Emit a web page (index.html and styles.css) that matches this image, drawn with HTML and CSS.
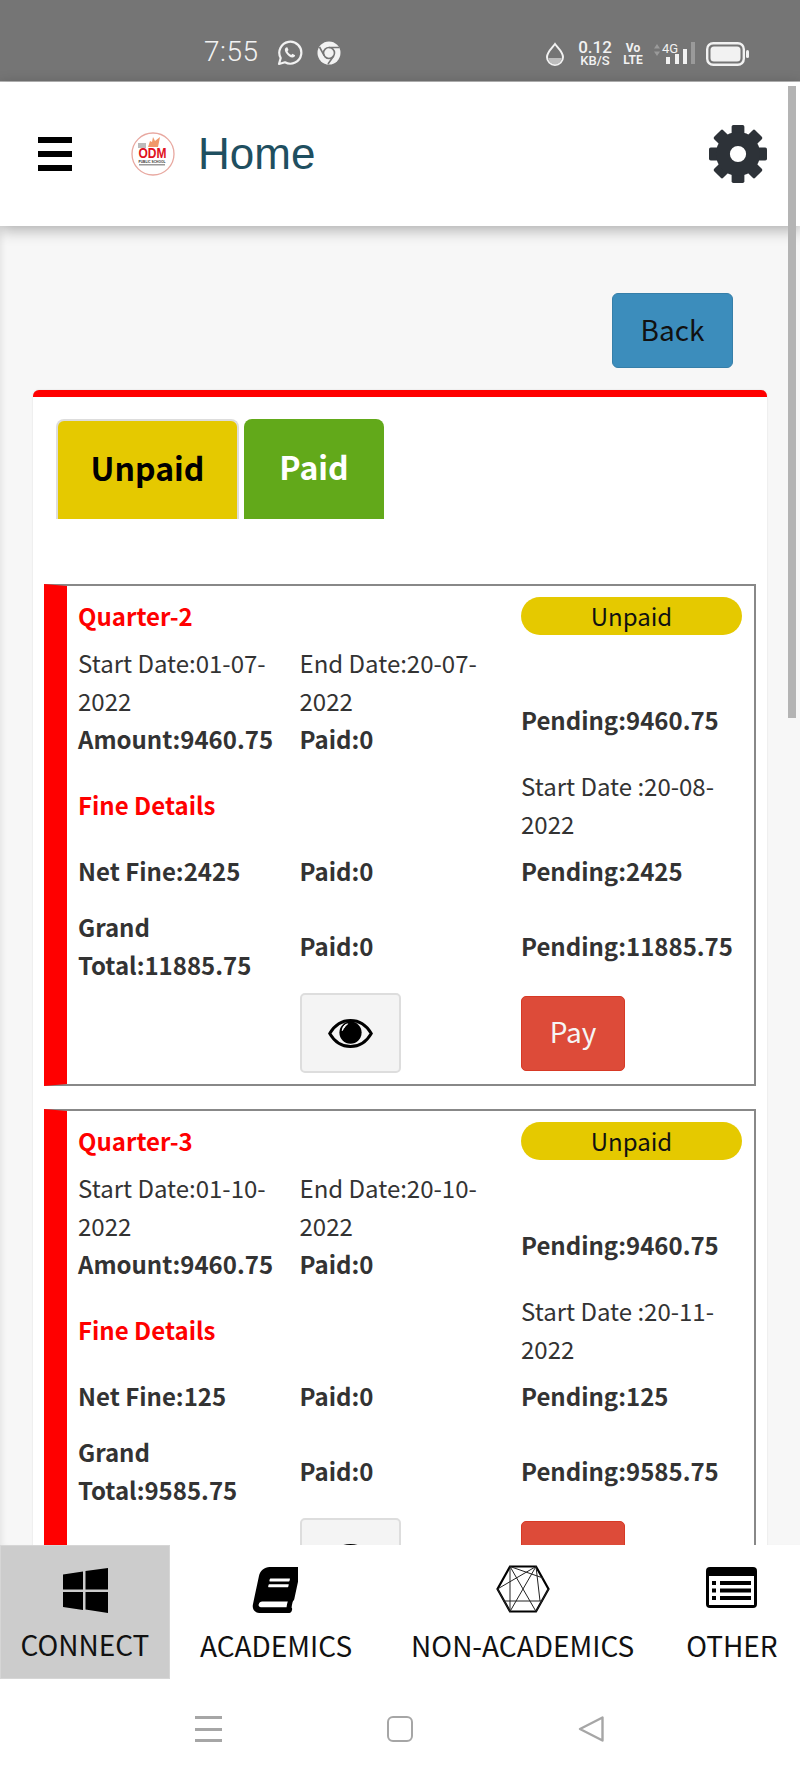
FILE: index.html
```html
<!DOCTYPE html>
<html lang="en">
<head>
  <meta charset="UTF-8">
  <meta name="viewport" content="width=device-width, initial-scale=1.0">
  <title>Home</title>
  <link rel="stylesheet" href="styles.css">
</head>
<body>

  <div class="scroll-thumb"></div>

  <!-- Phone status bar -->
  <div class="status-bar">
    <div class="status-left">
      <span class="clock">7:55</span>
      <svg class="st-whatsapp" viewBox="0 0 26 26"><path d="M2 24l1.7-6A11 11 0 1 1 8 22.3z" fill="none" stroke="#f2f2f2" stroke-width="2.2" stroke-linejoin="round"/><path d="M9 7.500c-1.500 1-1.600 3 0 5.500 1.800 2.800 4.500 4.600 6.500 4.500 1.500-.1 2.700-1.200 2.600-2.300l-2.700-1.400-1.200 1.200c-1.500-.6-3-2-3.700-3.700l1-1.200-1.200-2.800z" fill="#f2f2f2"/></svg>
      <svg class="st-chrome" viewBox="0 0 24 24"><circle cx="12" cy="12" r="11.500" fill="#f2f2f2"/><circle cx="12" cy="12" r="5.500" fill="#f2f2f2" stroke="#757575" stroke-width="1.600"/><path d="M12 6.500h10M7.200 14.700L2.500 6M16.800 14.700L11 23" stroke="#757575" stroke-width="1.600"/></svg>
    </div>
    <div class="status-right">
      <svg class="st-drop" viewBox="0 0 20 24"><path d="M10 2c3 4 8 8 8 13a8 8 0 0 1-16 0C2 10 7 6 10 2z" fill="none" stroke="#f2f2f2" stroke-width="2"/><path d="M3.500 16h13a6.500 6.500 0 0 1-13 0z" fill="#bdbdbd"/></svg>
      <div class="st-speed"><span class="st-num">0.12</span><span class="st-unit">KB/S</span></div>
      <div class="st-volte"><span>Vo</span><span>LTE</span></div>
      <div class="st-net">
        <svg class="st-arrows" viewBox="0 0 6 12"><path d="M3 0l3 4.500H0zM3 12L0 7.500h6z" fill="#9a9a9a"/></svg>
        <span class="st-4g">4G</span>
        <svg class="st-bars" viewBox="0 0 29 22"><rect x="0" y="15" width="4" height="7" fill="#f2f2f2"/><rect x="9" y="12" width="4" height="10" fill="#f2f2f2"/><rect x="17" y="7" width="4" height="15" fill="#f2f2f2"/><rect x="25" y="0" width="4" height="22" fill="#9a9a9a"/></svg>
      </div>
      <svg class="st-battery" viewBox="0 0 43 24"><rect x="1.200" y="1.200" width="36.600" height="21.600" rx="6" fill="none" stroke="#f2f2f2" stroke-width="2.400"/><rect x="4.500" y="4.500" width="30" height="15" rx="3.500" fill="#f2f2f2"/><rect x="40" y="8" width="3" height="8" rx="1.500" fill="#f2f2f2"/></svg>
    </div>
  </div>

  <!-- App header -->
  <header class="app-header">
    <div class="burger"><span></span><span></span><span></span></div>
    <svg class="logo" viewBox="0 0 44 44">
      <circle cx="22" cy="22" r="21" fill="#fff" stroke="#e8a8a0" stroke-width="1.300"/>
      <rect x="7" y="11" width="8" height="5" fill="#bbb"/>
      <path d="M17 15l2-6 2 1 1-5 2 4 5-4-2 10z" fill="#f0986a"/>
      <text x="7.500" y="26" class="logo-odm" textLength="28" lengthAdjust="spacingAndGlyphs">ODM</text>
      <text x="7.500" y="30.500" class="logo-school" textLength="27" lengthAdjust="spacingAndGlyphs">PUBLIC SCHOOL</text>
      <rect x="8" y="32" width="26" height="1.500" fill="#999"/>
    </svg>
    <h1 class="page-title">Home</h1>
    <svg class="gear" viewBox="0 0 100 100">
      <g fill="#2d3238">
        <rect x="39" y="0" width="22" height="24" rx="3"/>
        <rect x="39" y="0" width="22" height="24" rx="3" transform="rotate(45 50 50)"/>
        <rect x="39" y="0" width="22" height="24" rx="3" transform="rotate(90 50 50)"/>
        <rect x="39" y="0" width="22" height="24" rx="3" transform="rotate(135 50 50)"/>
        <rect x="39" y="0" width="22" height="24" rx="3" transform="rotate(180 50 50)"/>
        <rect x="39" y="0" width="22" height="24" rx="3" transform="rotate(225 50 50)"/>
        <rect x="39" y="0" width="22" height="24" rx="3" transform="rotate(270 50 50)"/>
        <rect x="39" y="0" width="22" height="24" rx="3" transform="rotate(315 50 50)"/>
      </g>
      <circle cx="50" cy="50" r="26" fill="none" stroke="#2d3238" stroke-width="24"/>
    </svg>
  </header>

  <main class="content">
    <div class="back-row">
      <button class="btn-back">Back</button>
    </div>

    <div class="card">
      <div class="tabs">
        <div class="tab tab-unpaid">Unpaid</div>
        <div class="tab tab-paid">Paid</div>
      </div>

      <!-- Quarter 2 -->
      <div class="fee-box">
        <div class="fee-row">
          <div class="red-title">Quarter-2</div>
          <div></div>
          <div class="pill">Unpaid</div>
        </div>
        <div class="fee-row row-top">
          <div>Start Date:01-07-2022<br><b>Amount:9460.75</b></div>
          <div>End Date:20-07-2022<br><b>Paid:0</b></div>
          <div class="pending-main"><b>Pending:9460.75</b></div>
        </div>
        <div class="fee-row">
          <div class="red-title">Fine Details</div>
          <div></div>
          <div>Start Date :20-08-2022</div>
        </div>
        <div class="fee-row row-fine">
          <div><b>Net Fine:2425</b></div>
          <div><b>Paid:0</b></div>
          <div><b>Pending:2425</b></div>
        </div>
        <div class="fee-row">
          <div><b>Grand Total:11885.75</b></div>
          <div><b>Paid:0</b></div>
          <div><b>Pending:11885.75</b></div>
        </div>
        <div class="fee-row">
          <div></div>
          <div>
            <button class="btn-eye">
              <svg class="eye" viewBox="0 0 46 30"><path d="M1.500 15C7 5.500 14 1.500 23 1.500S39 5.500 44.500 15C39 24.500 32 28.500 23 28.500S7 24.500 1.500 15z" fill="none" stroke="#000" stroke-width="3"/><circle cx="23" cy="14" r="11.500" fill="#000"/><path d="M20 5c-3 .7-5.500 3.500-5.500 7 2-3.500 3.500-5 5.500-7z" fill="#fff" stroke="#fff"/></svg>
            </button>
          </div>
          <div><button class="btn-pay">Pay</button></div>
        </div>
      </div>

      <!-- Quarter 3 -->
      <div class="fee-box">
        <div class="fee-row">
          <div class="red-title">Quarter-3</div>
          <div></div>
          <div class="pill">Unpaid</div>
        </div>
        <div class="fee-row row-top">
          <div>Start Date:01-10-2022<br><b>Amount:9460.75</b></div>
          <div>End Date:20-10-2022<br><b>Paid:0</b></div>
          <div class="pending-main"><b>Pending:9460.75</b></div>
        </div>
        <div class="fee-row">
          <div class="red-title">Fine Details</div>
          <div></div>
          <div>Start Date :20-11-2022</div>
        </div>
        <div class="fee-row row-fine">
          <div><b>Net Fine:125</b></div>
          <div><b>Paid:0</b></div>
          <div><b>Pending:125</b></div>
        </div>
        <div class="fee-row">
          <div><b>Grand Total:9585.75</b></div>
          <div><b>Paid:0</b></div>
          <div><b>Pending:9585.75</b></div>
        </div>
        <div class="fee-row">
          <div></div>
          <div>
            <button class="btn-eye">
              <svg class="eye" viewBox="0 0 46 30"><path d="M1.500 15C7 5.500 14 1.500 23 1.500S39 5.500 44.500 15C39 24.500 32 28.500 23 28.500S7 24.500 1.500 15z" fill="none" stroke="#000" stroke-width="3"/><circle cx="23" cy="14" r="11.500" fill="#000"/><path d="M20 5c-3 .7-5.500 3.500-5.500 7 2-3.500 3.500-5 5.500-7z" fill="#fff" stroke="#fff"/></svg>
            </button>
          </div>
          <div><button class="btn-pay">Pay</button></div>
        </div>
      </div>
    </div>
  </main>

  <!-- Bottom tabs -->
  <nav class="bottom-nav">
    <div class="nav-item nav-connect active">
      <svg class="ic-windows" viewBox="0 0 45 45"><path d="M0 6.500l20-3v18H0zM22.500 3l22.500-3v21.500H22.500zM0 24h20v18l-20-3zM22.500 24H45v21l-22.500-3.500z" fill="#000"/></svg>
      <span>CONNECT</span>
    </div>
    <div class="nav-item nav-academics">
      <svg class="ic-book" viewBox="0 0 56 56"><g transform="translate(9 0) skewX(-12) translate(3 0) scale(0.1094)"><path d="M448 360V24c0-13.300-10.700-24-24-24H96C43 0 0 43 0 96v320c0 53 43 96 96 96h328c13.300 0 24-10.700 24-24v-16c0-7.500-3.500-14.300-8.900-18.700-4.200-15.400-4.200-59.300 0-74.700 5.400-4.300 8.900-11.100 8.900-18.600zM128 134c0-3.300 2.700-6 6-6h212c3.300 0 6 2.700 6 6v20c0 3.300-2.700 6-6 6H134c-3.300 0-6-2.700-6-6v-20zm0 64c0-3.300 2.700-6 6-6h212c3.300 0 6 2.700 6 6v20c0 3.300-2.700 6-6 6H134c-3.300 0-6-2.700-6-6v-20zm253.400 250H96c-17.700 0-32-14.300-32-32 0-17.600 14.400-32 32-32h285.400c-1.900 17.100-1.900 46.900 0 64z" fill="#000"/></g></svg>
      <span>ACADEMICS</span>
    </div>
    <div class="nav-item nav-non">
      <svg class="ic-hex" viewBox="0 0 54 48">
        <path d="M14 1.500h26L52.500 24 40 46.500H14L1.500 24z" fill="none" stroke="#000" stroke-width="2.200"/>
        <path d="M14 1.500V46.500M14 1.500L40 46.500M14 1.500L47 13M40 1.500L14 46.500M40 1.500L1.500 24M40 1.500L44 36M1.500 24L14 46.500M7 36H47M52.500 24L40 46.500" fill="none" stroke="#222" stroke-width="1"/>
      </svg>
      <span>NON-ACADEMICS</span>
    </div>
    <div class="nav-item nav-other">
      <svg class="ic-list" viewBox="0 0 51 41"><path d="M4 0h43a4 4 0 0 1 4 4v33a4 4 0 0 1-4 4H4a4 4 0 0 1-4-4V4a4 4 0 0 1 4-4z" fill="#000"/><rect x="3" y="9" width="45" height="29" fill="#fff"/><g fill="#000"><rect x="6" y="14" width="4" height="4"/><rect x="6" y="21.500" width="4" height="4"/><rect x="6" y="29" width="4" height="4"/><rect x="14" y="14" width="31" height="4"/><rect x="14" y="21.500" width="31" height="4"/><rect x="14" y="29" width="31" height="4"/></g></svg>
      <span>OTHER</span>
    </div>
  </nav>

  <!-- Phone navigation keys -->
  <div class="system-nav">
    <div class="key-menu"><span></span><span></span><span></span></div>
    <div class="key-home"></div>
    <svg class="key-back" viewBox="0 0 26 26"><path d="M24.500 1.500v23L2 13z" fill="none" stroke="#a6a6a6" stroke-width="2.400" stroke-linejoin="round"/></svg>
  </div>

</body>
</html>
```

FILE: styles.css
```css
* {
  box-sizing: border-box;
}

html, body {
  margin: 0;
  height: 1778px;
}

body {
  display: flex;
  flex-direction: column;
  overflow: hidden;
  background: #fff;
  font-family: "Noto Sans CJK SC", "Noto Sans", sans-serif;
  font-size: 24px;
  line-height: 38px;
  color: #333;
}

.scroll-thumb {
  position: absolute;
  z-index: 3;
  left: 788px;
  top: 86px;
  width: 8px;
  height: 632px;
  background: #b4b4b4;
}

/* status bar */
.status-bar {
  flex: none;
  height: 82px;
  display: flex;
  align-items: flex-end;
  padding-bottom: 14px;
  background: #757575;
  border-bottom: 1px solid #bbb;
  color: #f2f2f2;
}

.status-left {
  display: flex;
  align-items: center;
  margin-left: 204px;
}

.clock {
  width: 73px;
  padding-bottom: 2px;
  font-family: Roboto, sans-serif;
  font-weight: 300;
  font-size: 28px;
  line-height: 26px;
  letter-spacing: 0.5px;
}

.st-whatsapp {
  width: 26px;
  height: 26px;
}

.st-chrome {
  width: 24px;
  height: 24px;
  margin-left: 14px;
}

.status-right {
  display: flex;
  align-items: center;
  margin-left: 204px;
}

.st-drop {
  width: 20px;
  height: 24px;
}

.st-speed {
  width: 36px;
  margin-left: 12px;
  display: flex;
  flex-direction: column;
  align-items: center;
  font-family: Roboto, sans-serif;
  font-weight: 500;
  line-height: 13px;
}

.st-num {
  font-size: 17px;
}

.st-unit {
  font-size: 13px;
}

.st-volte {
  width: 18px;
  margin-left: 11px;
  display: flex;
  flex-direction: column;
  align-items: center;
  font-family: Roboto, sans-serif;
  font-weight: 700;
  font-size: 12px;
  line-height: 12px;
}

.st-net {
  position: relative;
  width: 42px;
  height: 24px;
  margin-left: 12px;
}

.st-arrows {
  position: absolute;
  left: 0;
  top: 2px;
  width: 6px;
  height: 12px;
}

.st-4g {
  position: absolute;
  left: 8px;
  top: 0;
  font-family: Roboto, sans-serif;
  font-size: 13px;
  line-height: 14px;
}

.st-bars {
  position: absolute;
  left: 12px;
  bottom: 2px;
  width: 29px;
  height: 22px;
}

.st-battery {
  width: 43px;
  height: 24px;
  margin-left: 10px;
}

/* header */
.app-header {
  position: relative;
  z-index: 2;
  flex: none;
  height: 144px;
  display: flex;
  align-items: center;
  padding-left: 38px;
  background: #fff;
  box-shadow: 0 4px 14px rgba(0, 0, 0, 0.3);
}

.burger {
  width: 34px;
  height: 34px;
  display: flex;
  flex-direction: column;
  justify-content: space-between;
}

.burger span {
  height: 6px;
  background: #000;
}

.logo {
  width: 44px;
  height: 44px;
  margin-left: 59px;
}

.logo-odm {
  font-family: "Liberation Sans", sans-serif;
  font-weight: 700;
  font-size: 15px;
  fill: #e01020;
}

.logo-school {
  font-family: "Liberation Sans", sans-serif;
  font-weight: 700;
  font-size: 4px;
  fill: #333;
}

.page-title {
  margin: 0 0 0 23px;
  font-family: "Liberation Sans", sans-serif;
  font-weight: 400;
  font-size: 44px;
  line-height: 50px;
  color: #1f4f60;
}

.gear {
  width: 58px;
  height: 58px;
  margin-left: auto;
  margin-right: 33px;
}

/* page */
.content {
  position: relative;
  flex: 1;
  min-height: 0;
  overflow: hidden;
  padding: 67px 33px 0;
  background: #f7f7f7;
  box-shadow: inset 6px 0 6px -4px rgba(0, 0, 0, 0.08);
}

.back-row {
  display: flex;
  justify-content: flex-end;
  margin-right: 34px;
}

.btn-back {
  width: 121px;
  height: 75px;
  padding: 0 0 4px;
  background: #3c8dbc;
  border: 1px solid #367fa9;
  border-radius: 6px;
  font: inherit;
  font-size: 28px;
  color: #111;
}

.card {
  margin-top: 22px;
  padding: 22px 11px 0;
  background: #fff;
  border-top: 7px solid #f00;
  border-radius: 6px 6px 0 0;
  box-shadow: 0 0 2px rgba(0, 0, 0, 0.12);
}

.tabs {
  display: flex;
  gap: 5px;
  margin-left: 12px;
  margin-bottom: 65px;
}

.tab {
  height: 100px;
  display: flex;
  align-items: center;
  justify-content: center;
  padding-bottom: 6px;
  border-radius: 8px 8px 0 0;
  font-weight: 700;
  font-size: 32px;
}

.tab-unpaid {
  width: 183px;
  background: #e5c900;
  border: 2px solid #ddd;
  border-bottom: 0;
  color: #000;
}

.tab-paid {
  width: 140px;
  background: #62a91a;
  color: #fff;
}

.fee-box {
  display: flex;
  flex-direction: column;
  gap: 9px;
  height: 502px;
  margin-bottom: 23px;
  padding: 11px 11px 0 11px;
  border: 2px solid #888;
  border-left: 23px solid #f00;
}

.fee-row {
  display: grid;
  grid-template-columns: repeat(3, 221.5px);
  align-items: center;
}

.row-top {
  align-items: start;
}

.row-fine {
  margin-bottom: 9px;
}

.pending-main {
  padding-top: 57px;
}

.red-title {
  color: #f00;
  font-weight: 700;
}

.pill {
  width: 221px;
  height: 38px;
  border-radius: 19px;
  background: #e5c900;
  text-align: center;
  color: #111;
}

.btn-eye {
  width: 101px;
  height: 80px;
  display: flex;
  align-items: center;
  justify-content: center;
  padding: 0;
  background: #f4f4f4;
  border: 2px solid #ddd;
  border-radius: 5px;
}

.eye {
  width: 45px;
  height: 29px;
}

.btn-pay {
  width: 104px;
  height: 75px;
  padding: 0 0 4px;
  background: #dd4b39;
  border: 1px solid #d73925;
  border-radius: 5px;
  font: inherit;
  font-size: 28px;
  color: #f5f5f5;
}

/* bottom nav */
.bottom-nav {
  position: relative;
  z-index: 2;
  flex: none;
  height: 134px;
  display: flex;
  background: #fff;
  font-size: 28px;
  line-height: 36px;
  color: #111;
}

.nav-item {
  display: flex;
  flex-direction: column;
  align-items: center;
  justify-content: space-between;
  padding: 22px 0 16px;
}

.nav-connect {
  width: 170px;
  background: #ccc;
  border: 1px solid #d6d6d6;
}

.nav-academics {
  margin-left: 30px;
}

.nav-non {
  margin-left: 59px;
}

.nav-other {
  margin-left: 52px;
}

.ic-windows {
  width: 45px;
  height: 45px;
}

.ic-book {
  width: 48px;
  height: 46px;
  margin-left: -4px;
}

.ic-hex {
  width: 54px;
  height: 48px;
  margin-top: -2px;
}

.ic-list {
  width: 51px;
  height: 41px;
}

.system-nav {
  flex: none;
  height: 99px;
  display: flex;
  align-items: center;
  padding: 1px 0 0 195px;
  background: #fff;
}

.key-menu {
  width: 27px;
  height: 26px;
  display: flex;
  flex-direction: column;
  justify-content: space-between;
}

.key-menu span {
  height: 3px;
  background: #a6a6a6;
}

.key-home {
  width: 26px;
  height: 26px;
  margin-left: 165px;
  border: 2.5px solid #a6a6a6;
  border-radius: 6px;
}

.key-back {
  width: 26px;
  height: 26px;
  margin-left: 165px;
}
```
